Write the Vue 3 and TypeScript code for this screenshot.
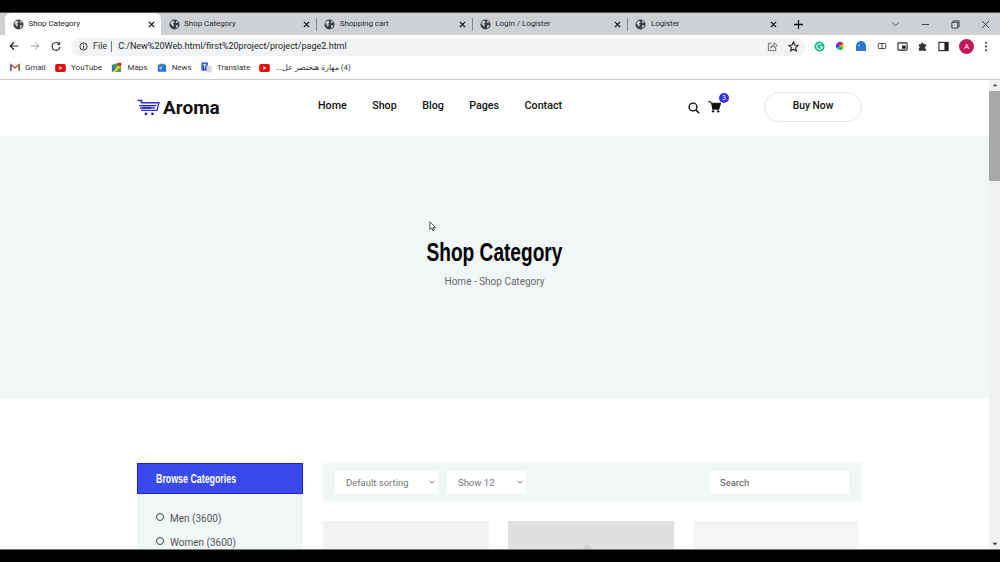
<script setup lang="ts">
interface Tab { title: string; active?: boolean }
interface Mark { label: string; icon: string; rtl?: boolean }
const tabs: Tab[] = [
  { title: 'Shop Category', active: true },
  { title: 'Shop Category' },
  { title: 'Shopping cart' },
  { title: 'Login / Logister' },
  { title: 'Logister' },
]
const marks: Mark[] = [
  { label: 'Gmail', icon: 'gmail' },
  { label: 'YouTube', icon: 'yt' },
  { label: 'Maps', icon: 'maps' },
  { label: 'News', icon: 'news' },
  { label: 'Translate', icon: 'translate' },
  { label: '(4) مهارة هتختصر عل...', icon: 'yt', rtl: true },
]
const nav: string[] = ['Home', 'Shop', 'Blog', 'Pages', 'Contact']
</script>

<template>
  <div class="screen">
    <div class="black top"></div>
    <div class="tabstrip">
      <div v-for="t in tabs" :key="t.title + (t.active ? 'a' : '')" class="tab" :class="{ active: t.active }">
        <svg class="globe" viewBox="0 0 12 12" width="11" height="11">
          <circle cx="6" cy="6" r="5.5" fill="#3c4043" />
          <path d="M2.5 2.5 L5 2 L6 3.5 L4.5 5 L5.5 6.5 L4 8.5 L3 6.5 L1.5 5 Z M7.5 1.5 L10 3 L9 4.5 L7.5 3.5 Z M7.5 7 L10 6.5 L9.5 9 L8 10 Z" fill="#c9ccd1" />
        </svg>
        <span class="tab-title">{{ t.title }}</span>
        <svg class="tab-x" viewBox="0 0 8 8" width="7" height="7"><path d="M1 1 L7 7 M7 1 L1 7" stroke="#111" stroke-width="1.5" /></svg>
      </div>
      <svg class="plus" viewBox="0 0 10 10" width="9" height="9"><path d="M5 0 V10 M0 5 H10" stroke="#111" stroke-width="1.4" /></svg>
      <div class="winctl">
        <svg viewBox="0 0 10 6" width="9" height="6"><path d="M1 1 L5 5 L9 1" fill="none" stroke="#444" stroke-width="1" /></svg>
        <svg viewBox="0 0 10 10" width="9" height="9"><path d="M1 5 H9" stroke="#333" stroke-width="1" /></svg>
        <svg viewBox="0 0 10 10" width="9" height="9"><path d="M2.5 2.5 V1 H9 V7.5 H7.5 M1 2.5 H7.5 V9 H1 Z" fill="none" stroke="#333" stroke-width="1" /></svg>
        <svg viewBox="0 0 10 10" width="9" height="9"><path d="M1 1 L9 9 M9 1 L1 9" stroke="#333" stroke-width="1" /></svg>
      </div>
    </div>

    <div class="toolbar">
      <svg class="nav-ic" viewBox="0 0 12 12" width="10" height="10"><path d="M11 6 H2 M6 1.5 L1.5 6 L6 10.5" fill="none" stroke="#222" stroke-width="1.4" /></svg>
      <svg class="nav-ic" viewBox="0 0 12 12" width="10" height="10"><path d="M1 6 H10 M6 1.5 L10.5 6 L6 10.5" fill="none" stroke="#9a9da0" stroke-width="1.2" /></svg>
      <svg class="nav-ic" viewBox="0 0 12 12" width="10" height="10"><path d="M10 4 A4.7 4.7 0 1 0 10.7 7" fill="none" stroke="#333" stroke-width="1.4" /><path d="M7 4.6 H11 V0.8 Z" fill="#333" /></svg>
      <div class="omnibox">
        <svg viewBox="0 0 10 10" width="9" height="9"><circle cx="5" cy="5" r="4" fill="none" stroke="#333" stroke-width="1.1" /><path d="M5 2.5 V3.5 M5 4.5 V7.5" stroke="#333" stroke-width="1.1" /></svg>
        <span class="file">File</span>
        <span class="pipe"></span>
        <span class="url">C:/New%20Web.html/first%20project/project/page2.html</span>
        <svg class="omni-share" viewBox="0 0 12 12" width="11" height="11"><path d="M5 2.5 H1.5 V10.5 H9.5 V7.5 M4 8 C4.5 5 6.5 4 8 4 V2 L11.5 5 L8 7.5 V5.5 C6.5 5.5 5 6 4 8 Z" fill="none" stroke="#555" stroke-width="0.9" /></svg>
        <svg class="omni-star" viewBox="0 0 12 12" width="11" height="11"><path d="M6 1 L7.5 4.4 L11 4.8 L8.4 7.2 L9.1 10.8 L6 9 L2.9 10.8 L3.6 7.2 L1 4.8 L4.5 4.4 Z" fill="none" stroke="#222" stroke-width="1.2" /></svg>
      </div>
      <div class="exts">
        <svg viewBox="0 0 12 12" width="11" height="11"><circle cx="6" cy="6" r="5.5" fill="#12b886" /><path d="M8.2 4 A3 3 0 1 0 9 6.4 H6.4" fill="none" stroke="#fff" stroke-width="1.2" /></svg>
        <svg viewBox="0 0 12 12" width="10" height="10">
          <path d="M6 6 L6 1 A5 5 0 0 1 10.3 3.5 Z" fill="#d6232a" /><path d="M6 6 L10.3 3.5 A5 5 0 0 1 10.3 8.5 Z" fill="#f5c518" />
          <path d="M6 6 L10.3 8.5 A5 5 0 0 1 6 11 Z" fill="#2eb82e" /><path d="M6 6 L6 11 A5 5 0 0 1 1.7 8.5 Z" fill="#18b6c9" />
          <path d="M6 6 L1.7 8.5 A5 5 0 0 1 1.7 3.5 Z" fill="#2038d0" /><path d="M6 6 L1.7 3.5 A5 5 0 0 1 6 1 Z" fill="#a020c0" />
        </svg>
        <svg viewBox="0 0 12 12" width="12" height="12"><path d="M1 11 V6 A5 5 0 0 1 11 6 V11 Z" fill="#2d77d2" /><circle cx="4" cy="5.5" r="0.8" fill="#cfe3fa" /></svg>
        <svg viewBox="0 0 12 12" width="10" height="10"><rect x="1.5" y="3" width="9" height="6" rx="1" fill="none" stroke="#333" stroke-width="1.1" /><path d="M6 3 V9" stroke="#333" stroke-width="1.1" /></svg>
        <svg viewBox="0 0 12 12" width="11" height="11"><rect x="1" y="2" width="10" height="8" rx="1" fill="none" stroke="#222" stroke-width="1.2" /><rect x="5.5" y="5" width="4" height="3.4" fill="#222" /></svg>
        <svg viewBox="0 0 12 12" width="11" height="11"><path d="M4.5 2.5 A1.3 1.3 0 0 1 7 2.5 V3.5 H10 V6 A1.4 1.4 0 0 0 10 8.8 V10.5 H2 V8 A1.4 1.4 0 0 0 2 5.4 V3.5 H4.5 Z" fill="#333" /></svg>
        <svg viewBox="0 0 12 12" width="11" height="11"><rect x="1" y="1.5" width="10" height="9" fill="none" stroke="#222" stroke-width="1.2" /><rect x="7" y="1.5" width="4" height="9" fill="#222" /></svg>
        <span class="avatar">A</span>
        <svg viewBox="0 0 4 12" width="4" height="11"><circle cx="2" cy="2" r="1.1" fill="#333" /><circle cx="2" cy="6" r="1.1" fill="#333" /><circle cx="2" cy="10" r="1.1" fill="#333" /></svg>
      </div>
    </div>

    <div class="bookmarks">
      <div v-for="m in marks" :key="m.label" class="mark">
        <svg v-if="m.icon === 'gmail'" viewBox="0 0 12 10" width="10" height="9"><path d="M1 9 V1.5 L6 5.5 L11 1.5 V9" fill="none" stroke="#d93025" stroke-width="1.6" /><path d="M1 9 V3" stroke="#2a6fdb" stroke-width="1.6" /><path d="M11 9 V3" stroke="#1e9e50" stroke-width="1.6" /></svg>
        <svg v-else-if="m.icon === 'yt'" viewBox="0 0 12 9" width="11" height="8"><rect width="12" height="9" rx="2" fill="#e01010" /><path d="M4.8 2.5 L8 4.5 L4.8 6.5 Z" fill="#fff" /></svg>
        <svg v-else-if="m.icon === 'maps'" viewBox="0 0 12 12" width="11" height="11"><path d="M1 3 L7 1 L11 3 V11 H3 L1 11 Z" fill="#3aa757" /><path d="M1 11 L9 3 L11 5 L5 11 Z" fill="#f5c518" /><path d="M1 3 L5 7 L1 11 Z" fill="#2a6fdb" /><circle cx="9.5" cy="2.5" r="2" fill="#d93025" /></svg>
        <svg v-else-if="m.icon === 'news'" viewBox="0 0 12 12" width="10" height="10"><rect x="1" y="2.5" width="10" height="8" fill="#2a6fdb" /><path d="M2 2.5 L3 1 H9 L10 2.5 Z" fill="#3aa757" /><path d="M3 5 H6 M3 7 H6" stroke="#fff" stroke-width="1" /></svg>
        <svg v-else viewBox="0 0 12 12" width="11" height="11"><rect x="0.5" y="0.5" width="7" height="9" fill="#2a5fc8" /><rect x="6" y="4" width="5.5" height="7.5" fill="#d4d7dc" /><path d="M2 3 H6 M4 2 V7" stroke="#fff" stroke-width="0.9" /></svg>
        <span :class="{ rtl: m.rtl }">{{ m.label }}</span>
      </div>
    </div>

    <div class="viewport">
      <div class="page">
        <header class="site-head">
          <div class="logo">
            <svg viewBox="0 0 24 18" width="23" height="17">
              <path d="M0.5 1.5 H5 L4 4 M4 4 H23 L21 12 H4 M2 7 H14 M3 9.5 H15" fill="none" stroke="#2a2ce0" stroke-width="1.5" />
              <path d="M6 7 H20 M5 9.5 H19" stroke="#1b1bb0" stroke-width="1.3" />
              <rect x="8" y="14.5" width="2.5" height="2.5" fill="#1b1bb0" /><rect x="15" y="14.5" width="2.5" height="2.5" fill="#1b1bb0" />
            </svg>
            <span>Aroma</span>
          </div>
          <nav class="menu"><a v-for="n in nav" :key="n">{{ n }}</a></nav>
          <div class="head-right">
            <svg class="search-ic" viewBox="0 0 12 12" width="12" height="12"><circle cx="5" cy="5" r="3.9" fill="none" stroke="#111" stroke-width="1.4" /><path d="M8 8 L11.3 11.3" stroke="#111" stroke-width="1.6" /></svg>
            <div class="cart">
              <svg viewBox="0 0 14 13" width="13" height="12"><path d="M0 0.8 H2.5 L3.5 2.5 H13.5 L12 7.8 H4.8 L5.2 9 H12" fill="none" stroke="#111" stroke-width="1.1" /><path d="M3.2 2.5 H13.5 L12 7.8 H4.6 Z" fill="#111" /><circle cx="5.5" cy="11.2" r="1.3" fill="#111" /><circle cx="11" cy="11.2" r="1.3" fill="#111" /></svg>
              <span class="badge">3</span>
            </div>
            <a class="buy">Buy Now</a>
          </div>
        </header>

        <section class="hero">
          <h1>Shop Category</h1>
          <p>Home - Shop Category</p>
        </section>

        <section class="shop">
          <aside class="side">
            <h2><span>Browse Categories</span></h2>
            <ul>
              <li><i></i>Men (3600)</li>
              <li><i></i>Women (3600)</li>
            </ul>
          </aside>
          <div class="main">
            <div class="filter">
              <div class="sel sel-a">Default sorting<svg viewBox="0 0 8 5" width="6" height="4"><path d="M1 1 L4 4 L7 1" fill="none" stroke="#555" stroke-width="1.1" /></svg></div>
              <div class="sel sel-b">Show 12<svg viewBox="0 0 8 5" width="6" height="4"><path d="M1 1 L4 4 L7 1" fill="none" stroke="#555" stroke-width="1.1" /></svg></div>
              <div class="find">Search</div>
            </div>
            <div class="cards">
              <div class="card c1"></div>
              <div class="card c2"><span class="peak"></span></div>
              <div class="card c3"></div>
            </div>
          </div>
        </section>
      </div>
      <div class="scrollbar">
        <svg viewBox="0 0 8 6" width="6" height="4"><path d="M0.5 5 L4 1 L7.5 5 Z" fill="#555" /></svg>
        <div class="thumb"></div>
        <div class="grow"></div>
        <svg viewBox="0 0 8 6" width="6" height="4"><path d="M0.5 1 L4 5 L7.5 1 Z" fill="#333" /></svg>
      </div>
      <svg class="cursor" viewBox="0 0 10 14" width="8" height="11"><path d="M1 1 V11 L3.4 8.8 L5 12.4 L6.6 11.7 L5 8.2 H8.2 Z" fill="#fff" stroke="#222" stroke-width="1" /></svg>
    </div>
    <div class="black bottom"></div>
  </div>
</template>

<style>
html, body { margin: 0; background: #000; }
</style>

<style scoped>
.screen { width: 1000px; height: 562px; overflow: hidden; display: flex; flex-direction: column; font-family: Roboto, "Liberation Sans", sans-serif; background: #fff; }
.black { background: #000; flex: none; }
.top { height: 12px; border-bottom: 1px solid #555; }
.bottom { height: 12px; border-top: 1px solid #777; }

.tabstrip { height: 22px; flex: none; background: #ced1d4; display: flex; align-items: center; padding-left: 5px; position: relative; }
.tab { width: 155.6px; height: 22px; box-sizing: border-box; display: flex; align-items: center; padding: 0 6px 0 8px; font-size: 8px; color: #2a2c2f; position: relative; }
.tab + .tab + .tab::before { content: ""; position: absolute; left: 0; top: 5px; height: 13px; width: 1px; background: #85888b; }
.tab:last-of-type::after { content: ""; position: absolute; right: 0; top: 5px; height: 13px; width: 1px; background: #85888b; }
.tab.active { background: #fff; border-radius: 6px 6px 0 0; color: #222; }
.globe { flex: none; margin-right: 4.5px; }
.tab-title { flex: 1; white-space: nowrap; padding-bottom: 2px; letter-spacing: -0.05px; }
.tab-x { flex: none; }
.plus { margin-left: 11px; flex: none; }
.winctl { margin-left: auto; display: flex; align-items: center; width: 109.5px; justify-content: space-between; padding-right: 10.5px; box-sizing: border-box; }

.toolbar { height: 22px; flex: none; background: #fff; display: flex; align-items: center; padding-left: 9px; }
.nav-ic { flex: none; margin-right: 11px; }
.omnibox { width: 735px; height: 18px; margin: 1px 0 0 -1px; background: #f1f3f4; border-radius: 9px; display: flex; align-items: center; padding: 0 7px 1px 8px; box-sizing: border-box; font-size: 9px; color: #222; }
.file { margin-left: 5px; color: #333; }
.pipe { width: 1px; height: 11px; background: #777; margin: 0 6px 0 4px; }
.url { flex: 1; color: #1c1c1c; white-space: nowrap; }
.omni-share { margin-right: 10px; }
.exts { flex: 1; display: flex; align-items: center; justify-content: space-between; padding: 0 12px 0 8px; }
.avatar { width: 15px; height: 15px; border-radius: 50%; background: #c2185b; color: #fff; font-size: 7.5px; display: flex; align-items: center; justify-content: center; }

.bookmarks { height: 23px; flex: none; box-sizing: border-box; background: #fff; display: flex; align-items: center; padding: 0 0 1px 10px; gap: 9.3px; font-size: 8px; color: #333; border-bottom: 1px solid #c9cbcd; }
.mark { display: flex; align-items: center; gap: 5px; white-space: nowrap; }
.rtl { direction: rtl; unicode-bidi: isolate; }

.viewport { flex: 1; min-height: 0; display: flex; position: relative; overflow: hidden; }
.page { flex: 1; min-width: 0; background: #fff; overflow: hidden; }
.site-head { height: 56px; display: flex; align-items: center; padding: 0 127px 0 137px; }
.logo { display: flex; align-items: center; gap: 3px; width: 181px; font: 700 19px Roboto, sans-serif; color: #111; margin-top: -2px; }
.menu { display: flex; gap: 25.5px; font-size: 10.7px; font-weight: 500; color: #111; margin-top: -5px; }
.head-right { margin-left: auto; display: flex; align-items: center; margin-top: -2px; }
.search-ic { margin-right: 8px; margin-top: 2px; }
.cart { position: relative; display: flex; margin-right: 43px; }
.badge { position: absolute; left: 11px; top: -8px; width: 10px; height: 10px; border-radius: 50%; background: #3a2fe0; color: #fff; font-size: 6.5px; display: flex; align-items: center; justify-content: center; }
.buy { width: 98px; height: 30px; box-sizing: border-box; border: 1px solid #e5e5e5; border-radius: 15px; font-size: 10.3px; font-weight: 500; color: #111; display: flex; align-items: center; justify-content: center; padding-bottom: 3px; }

.hero { height: 262px; background: #f1f6f7; display: flex; flex-direction: column; align-items: center; padding-top: 100px; box-sizing: border-box; }
.hero h1 { margin: 0; font: 700 26px/32px "Liberation Sans", sans-serif; color: #000; transform: scaleX(0.735); }
.hero p { margin: 7px 0 0; font-size: 10px; line-height: 14px; color: #6b6b6b; }

.shop { display: flex; gap: 20px; padding: 65px 127px 0 137px; }
.side { width: 166px; flex: none; background: #f1f6f7; height: 200px; }
.side h2 { margin: 0; height: 31px; box-sizing: border-box; background: #384aeb; border: 1px solid #2420c8; padding: 0 18px; font: 700 13px/30px "Liberation Sans", sans-serif; color: #fff; }
.side h2 span { display: inline-block; transform: scaleX(0.68); transform-origin: left center; white-space: nowrap; }
.side ul { list-style: none; margin: 12px 0 0; padding: 0 0 0 19px; font-size: 10px; color: #555; }
.side li { display: flex; align-items: center; height: 24px; }
.side i { width: 6px; height: 6px; border: 1px solid #444; border-radius: 50%; margin-right: 6px; margin-top: -3px; }

.main { flex: 1; min-width: 0; }
.filter { height: 38px; background: #f1f6f7; display: flex; align-items: center; padding: 0 13px 0 12px; gap: 9px; font-size: 9.5px; color: #777; }
.sel { height: 23px; background: #fff; display: flex; align-items: center; justify-content: space-between; padding: 0 3px 0 11px; box-sizing: border-box; }
.sel-a { width: 103px; }
.sel-b { width: 79px; }
.find { margin-left: auto; width: 139px; height: 23px; background: #fff; display: flex; align-items: center; padding-left: 10px; box-sizing: border-box; color: #555; }
.cards { display: flex; gap: 19px; margin-top: 20px; }
.card { width: 166px; height: 60px; flex: none; }
.c1 { background: #f2f2f2; }
.c2 { background: #e0e0e0; position: relative; }
.c3 { background: #f5f5f5; }
.peak { position: absolute; left: 74px; top: 23px; width: 0; height: 0; border-left: 5px solid transparent; border-right: 5px solid transparent; border-bottom: 5px solid #cfcfcf; }

.scrollbar { width: 11px; flex: none; background: #f1f1f1; display: flex; flex-direction: column; align-items: center; padding: 3px 0; box-sizing: border-box; }
.thumb { width: 100%; height: 90px; background: #a8a8a8; margin-top: 4px; }
.grow { flex: 1; }
.cursor { position: absolute; left: 429px; top: 141px; }
</style>
